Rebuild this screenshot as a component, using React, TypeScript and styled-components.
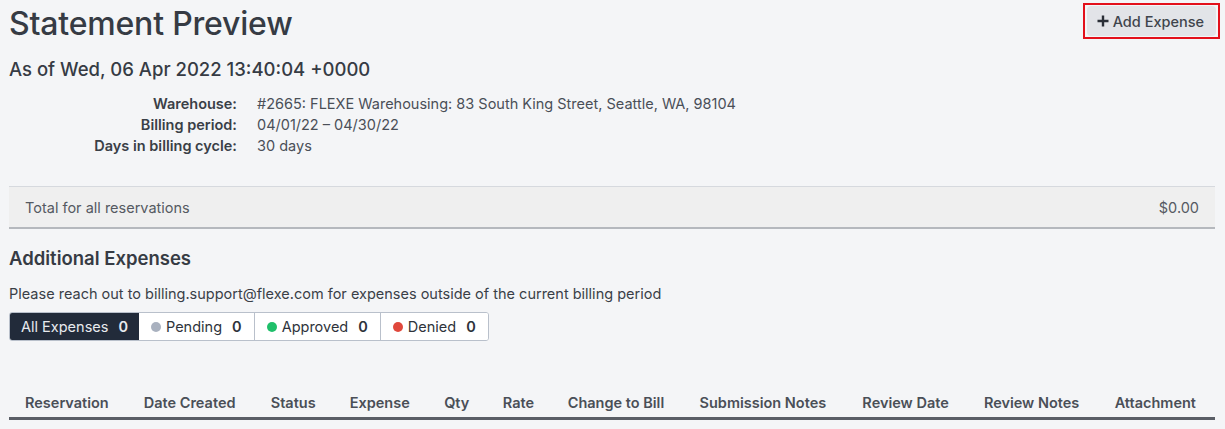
import React from 'react';
import styled, { createGlobalStyle } from 'styled-components';

const GlobalStyle = createGlobalStyle`
  body {
    margin: 0;
    background: #f4f5f7;
    font-family: Inter, "Noto Sans", sans-serif;
    color: #3a3f47;
  }
`;

const Page = styled.div`
  padding: 0 10px 0 9px;
  width: 1225px;
  box-sizing: border-box;
`;

const Header = styled.header`
  display: flex;
  justify-content: space-between;
  align-items: flex-start;
`;

const Title = styled.h1`
  margin: 4px 0 0;
  font-size: 32px;
  font-weight: 500;
  line-height: 40px;
  color: #363b44;
  letter-spacing: -0.2px;
`;

const Highlight = styled.div`
  margin-top: 3px;
  margin-right: -5px;
  border: 2px solid #e3101b;
  padding: 1px 2px;
`;

const AddButton = styled.button`
  display: flex;
  align-items: center;
  gap: 4px;
  height: 30px;
  padding: 0 12px 0 10px;
  border: none;
  border-radius: 4px;
  background: #e2e4e8;
  color: #3f444c;
  font-family: inherit;
  font-size: 14.5px;
  font-weight: 500;
  cursor: pointer;
`;

const Subtitle = styled.h2`
  margin: 13px 0 0;
  font-size: 18.5px;
  font-weight: 500;
  line-height: 24px;
  color: #363b44;
`;

const Details = styled.dl`
  display: grid;
  grid-template-columns: 228px 1fr;
  column-gap: 20px;
  margin: 12px 0 0;
  font-size: 14.5px;
  line-height: 21px;
`;

const Label = styled.dt`
  text-align: right;
  font-weight: 600;
  color: #3a3f47;
`;

const Value = styled.dd`
  margin: 0;
  color: #4a4f57;
`;

const TotalBar = styled.div`
  display: flex;
  justify-content: space-between;
  align-items: center;
  margin-top: 30px;
  height: 40px;
  padding: 0 16px;
  background: #efefef;
  border-top: 1px solid #d6d9de;
  border-bottom: 2px solid #b5b8bd;
  font-size: 14.5px;
  color: #555a62;
`;

const SectionTitle = styled.h3`
  margin: 17px 0 0;
  font-size: 18.5px;
  font-weight: 600;
  line-height: 24px;
  color: #363b44;
`;

const Note = styled.p`
  margin: 14px 0 0;
  font-size: 14.5px;
  line-height: 20px;
  color: #3a3f47;
`;

const Tabs = styled.div`
  display: inline-flex;
  margin-top: 8px;
  border: 1px solid #b9c0cb;
  border-radius: 3px;
  overflow: hidden;
  background: #fff;
`;

const Tab = styled.button<{ $active?: boolean }>`
  display: flex;
  align-items: center;
  gap: 5px;
  height: 27px;
  padding: 0 ${p => (p.$active ? '11px' : '12px')};
  border: none;
  border-left: ${p => (p.$active ? 'none' : '1px solid #b9c0cb')};
  background: ${p => (p.$active ? '#222b3a' : '#fff')};
  color: ${p => (p.$active ? '#e8eaee' : '#2e333b')};
  font-family: inherit;
  font-size: 14.5px;
  cursor: pointer;
  &:nth-child(2) {
    border-left: none;
  }
`;

const Count = styled.span`
  margin-left: 5px;
  font-weight: 600;
`;

const Dot = styled.span<{ $color: string }>`
  width: 10px;
  height: 10px;
  border-radius: 50%;
  background: ${p => p.$color};
`;

const Table = styled.table`
  width: 100%;
  margin-top: 48px;
  border-collapse: collapse;
`;

const Th = styled.th`
  padding: 5px 16px 6px;
  text-align: left;
  font-size: 14.5px;
  font-weight: 600;
  color: #4a4f57;
  white-space: nowrap;
  border-bottom: 3px solid #5a5e66;
`;

const PlusIcon = () => (
  <svg width="12" height="12" viewBox="0 0 12 12">
    <path d="M6 0.5v11M0.5 6h11" stroke="#2a2f37" strokeWidth="2.4" />
  </svg>
);

const columns = [
  'Reservation',
  'Date Created',
  'Status',
  'Expense',
  'Qty',
  'Rate',
  'Change to Bill',
  'Submission Notes',
  'Review Date',
  'Review Notes',
  'Attachment',
];

const App: React.FC = () => {
  return (
    <>
      <GlobalStyle />
      <Page>
        <Header>
          <Title>Statement Preview</Title>
          <Highlight>
            <AddButton>
              <PlusIcon />
              Add Expense
            </AddButton>
          </Highlight>
        </Header>
        <Subtitle>As of Wed, 06 Apr 2022 13:40:04 +0000</Subtitle>

        <Details>
          <Label>Warehouse:</Label>
          <Value>#2665: FLEXE Warehousing: 83 South King Street, Seattle, WA, 98104</Value>
          <Label>Billing period:</Label>
          <Value>04/01/22 – 04/30/22</Value>
          <Label>Days in billing cycle:</Label>
          <Value>30 days</Value>
        </Details>

        <TotalBar>
          <span>Total for all reservations</span>
          <span>$0.00</span>
        </TotalBar>

        <SectionTitle>Additional Expenses</SectionTitle>
        <Note>Please reach out to billing.support@flexe.com for expenses outside of the current billing period</Note>

        <Tabs>
          <Tab $active>
            All Expenses<Count>0</Count>
          </Tab>
          <Tab>
            <Dot $color="#a9b1bf" />
            Pending<Count>0</Count>
          </Tab>
          <Tab>
            <Dot $color="#1fbf6a" />
            Approved<Count>0</Count>
          </Tab>
          <Tab>
            <Dot $color="#e0483c" />
            Denied<Count>0</Count>
          </Tab>
        </Tabs>

        <Table>
          <thead>
            <tr>
              {columns.map(c => (
                <Th key={c}>{c}</Th>
              ))}
            </tr>
          </thead>
        </Table>
      </Page>
    </>
  );
};

export default App;
